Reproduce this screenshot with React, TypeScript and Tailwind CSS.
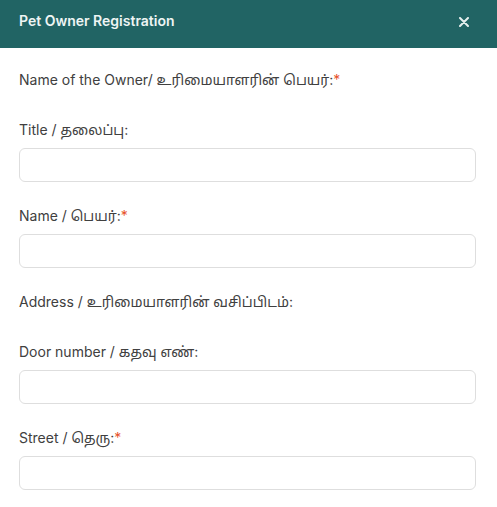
import React from "react"

function Label({ text, required }: { text: string; required?: boolean }) {
  return (
    <label className="block text-[14px] leading-5 text-[#404040]">
      {text}
      {required && <span className="text-[#e8522a]">*</span>}
    </label>
  )
}

function Field({ label, required }: { label: string; required?: boolean }) {
  return (
    <div className="mb-6">
      <Label text={label} required={required} />
      <input
        type="text"
        className="mt-2 block h-[34px] w-full rounded-md border border-[#dedede] bg-white px-3 text-sm outline-none"
      />
    </div>
  )
}

export default function App() {
  return (
    <div
      className="h-[507px] w-[497px] overflow-hidden bg-white"
      style={{ fontFamily: "'Inter', 'Noto Sans Tamil', 'Lohit Tamil', 'Noto Serif Tamil', 'Noto Sans', sans-serif" }}
    >
      <div className="flex h-12 items-start justify-between bg-[#216464] pl-[19px] pr-[28px] pt-[11px]">
        <h2 className="text-[14px] font-semibold leading-5 text-[#eef5f4]">Pet Owner Registration</h2>
        <button className="mt-[6px] text-[#e6efee]">
          <svg width="10" height="10" viewBox="0 0 10 10" fill="none" stroke="currentColor" strokeWidth="2" strokeLinecap="round">
            <path d="M1 1l8 8M9 1l-8 8" />
          </svg>
        </button>
      </div>
      <div className="pl-[19px] pr-[21px] pt-[22px]">
        <div className="mb-[30px]">
          <Label text="Name of the Owner/ உரிமையாளரின் பெயர்:" required />
        </div>
        <Field label="Title / தலைப்பு:" />
        <Field label="Name / பெயர்:" required />
        <div className="mb-[30px]">
          <Label text="Address / உரிமையாளரின் வசிப்பிடம்:" />
        </div>
        <Field label="Door number / கதவு எண்:" />
        <Field label="Street / தெரு:" required />
      </div>
    </div>
  )
}
